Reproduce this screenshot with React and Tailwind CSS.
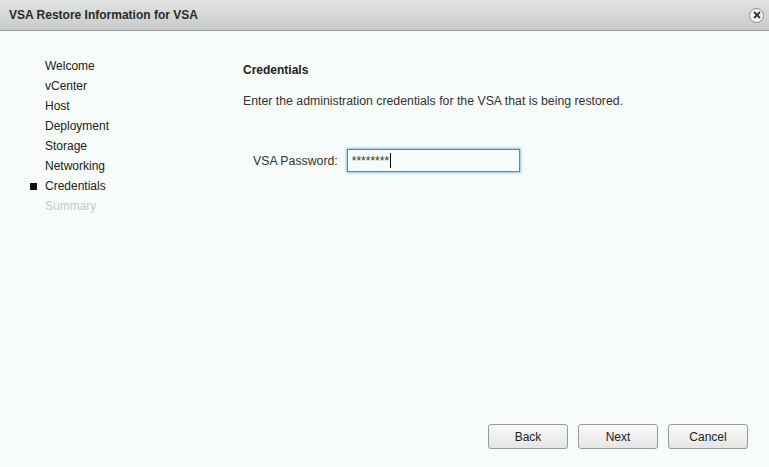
export default function App() {
  const steps = ["Welcome", "vCenter", "Host", "Deployment", "Storage", "Networking", "Credentials", "Summary"];
  const current = 6;

  return (
    <div className="w-[769px] h-[467px] bg-[#f7fbf9] flex flex-col text-[12px] text-[#333]" style={{ fontFamily: '"Liberation Sans", Arial, sans-serif' }}>
      <div className="h-[31px] shrink-0 flex items-center justify-between pl-[9px] pr-[5px] bg-gradient-to-b from-[#e2e4e4] to-[#c9cbcb] border-b border-[#9a9c9c]">
        <span className="font-bold text-[12px] text-[#2a2a2a]">VSA Restore Information for VSA</span>
        <span className="w-[15px] h-[15px] rounded-full bg-[#f4f4f4] border border-[#8a8a8a] flex items-center justify-center">
          <svg width="8" height="8" viewBox="0 0 8 8">
            <path d="M1 1L7 7M7 1L1 7" stroke="#333" strokeWidth="1.8" />
          </svg>
        </span>
      </div>

      <div className="flex flex-1">
        <div className="w-[243px] shrink-0 pt-[25px] pl-[30px]">
          {steps.map((s, i) => (
            <div key={s} className="h-[20px] flex items-center">
              <span className="w-[15px] flex items-center">
                {i === current && <span className="w-[7px] h-[7px] bg-[#111]" />}
              </span>
              <span className={i > current ? "text-[#c8c8c8]" : "text-[#222]"}>{s}</span>
            </div>
          ))}
        </div>

        <div className="flex-1 flex flex-col pt-[30px]">
          <div className="font-bold text-[#222]">Credentials</div>
          <div className="mt-[13px] text-[12.3px]">Enter the administration credentials for the VSA that is being restored.</div>
          <div className="mt-[39px] ml-[10px] flex items-center gap-[9px]">
            <span className="text-[12.3px]">VSA Password:</span>
            <div className="w-[173px] h-[23px] border border-[#4a8fc4] shadow-[0_0_2px_1px_#8ec6ee] bg-[#f7fbf9] flex items-center pl-[4px] text-[12px]">
              ********<span className="w-[1px] h-[15px] bg-black ml-[1px]" />
            </div>
          </div>

          <div className="mt-auto mb-[18px] mr-[21px] flex justify-end gap-[10px]">
            {["Back", "Next", "Cancel"].map((b) => (
              <button key={b} className="w-[80px] h-[25px] rounded-[3px] border border-[#999] bg-gradient-to-b from-[#f9f9f9] to-[#e4e6e6] text-[12px] text-[#222]">
                {b}
              </button>
            ))}
          </div>
        </div>
      </div>
    </div>
  );
}
